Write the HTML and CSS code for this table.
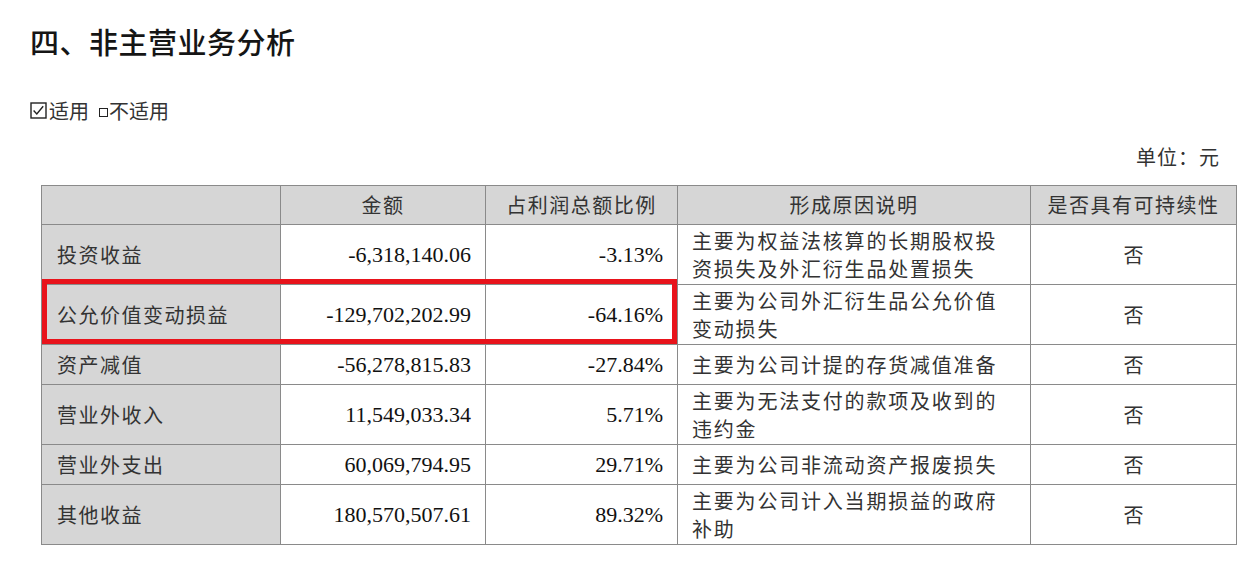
FILE: index.html
```html
<!DOCTYPE html>
<html lang="zh-CN">
<head>
<meta charset="utf-8">
<title>四、非主营业务分析</title>
<link rel="stylesheet" href="styles.css">
</head>
<body>
<div class="page">
  <h1 class="title">四、非主营业务分析</h1>
  <div class="applicable">
    <svg class="check" width="17" height="17" viewBox="0 0 17 17" aria-hidden="true">
      <rect x="1" y="1" width="15" height="15" fill="none" stroke="#222" stroke-width="1.4"/>
      <path d="M3.6 8.6 L6.8 12 L13.2 4.2" fill="none" stroke="#222" stroke-width="1.4"/>
    </svg><span>适用</span><span class="box"></span><span>不适用</span>
  </div>
  <div class="unit">单位：元</div>
  <div class="table-wrap">
    <table class="data">
      <colgroup>
        <col class="c1"><col class="c2"><col class="c3"><col class="c4"><col class="c5">
      </colgroup>
      <thead>
        <tr>
          <th></th>
          <th>金额</th>
          <th>占利润总额比例</th>
          <th>形成原因说明</th>
          <th>是否具有可持续性</th>
        </tr>
      </thead>
      <tbody>
        <tr class="two">
          <td class="name">投资收益</td>
          <td class="num">-6,318,140.06</td>
          <td class="num">-3.13%</td>
          <td class="desc">主要为权益法核算的长期股权投资损失及外汇衍生品处置损失</td>
          <td class="yn">否</td>
        </tr>
        <tr class="two">
          <td class="name">公允价值变动损益</td>
          <td class="num">-129,702,202.99</td>
          <td class="num">-64.16%</td>
          <td class="desc">主要为公司外汇衍生品公允价值变动损失</td>
          <td class="yn">否</td>
        </tr>
        <tr class="one">
          <td class="name">资产减值</td>
          <td class="num">-56,278,815.83</td>
          <td class="num">-27.84%</td>
          <td class="desc">主要为公司计提的存货减值准备</td>
          <td class="yn">否</td>
        </tr>
        <tr class="two">
          <td class="name">营业外收入</td>
          <td class="num">11,549,033.34</td>
          <td class="num">5.71%</td>
          <td class="desc">主要为无法支付的款项及收到的违约金</td>
          <td class="yn">否</td>
        </tr>
        <tr class="one">
          <td class="name">营业外支出</td>
          <td class="num">60,069,794.95</td>
          <td class="num">29.71%</td>
          <td class="desc">主要为公司非流动资产报废损失</td>
          <td class="yn">否</td>
        </tr>
        <tr class="two">
          <td class="name">其他收益</td>
          <td class="num">180,570,507.61</td>
          <td class="num">89.32%</td>
          <td class="desc">主要为公司计入当期损益的政府补助</td>
          <td class="yn">否</td>
        </tr>
      </tbody>
    </table>
    <div class="highlight"></div>
  </div>
</div>
</body>
</html>
```

FILE: styles.css
```css
* { box-sizing: border-box; }

html, body {
  margin: 0;
  padding: 0;
  background: #ffffff;
}

body {
  font-family: "Noto Sans CJK SC", "Noto Sans CJK JP", sans-serif;
  color: #2b2b2b;
}

.page {
  width: 1260px;
  height: 564px;
  padding: 21px 0 0 30px;
  overflow: hidden;
}

.title {
  margin: 0;
  font-size: 29px;
  line-height: 40px;
  font-weight: 500;
  color: #151515;
  letter-spacing: 0.5px;
}

.applicable {
  margin-top: 34px;
  display: flex;
  align-items: center;
  height: 30px;
  font-size: 20px;
  color: #333;
}

.applicable .check {
  display: block;
  margin-right: 2px;
}

.applicable .box {
  display: inline-block;
  width: 9px;
  height: 9px;
  border: 1.4px solid #222;
  margin: 5px 1px 0 10px;
}

.unit {
  margin-top: 17px;
  width: 1190px;
  text-align: right;
  font-size: 20px;
  line-height: 30px;
  letter-spacing: 1px;
  color: #333;
}

.table-wrap {
  position: relative;
  margin-top: 13px;
  margin-left: 11px;
  width: 1195px;
}

.data {
  border-collapse: collapse;
  table-layout: fixed;
  width: 1195px;
  font-size: 20px;
}

.c1 { width: 239px; }
.c2 { width: 205px; }
.c3 { width: 192px; }
.c4 { width: 353px; }
.c5 { width: 206px; }

.data th,
.data td {
  border: 1px solid #8a8a8a;
  padding: 1px 14px;
  line-height: 28px;
  vertical-align: middle;
}

.data th {
  background: #d6d6d6;
  font-weight: 400;
  height: 39px;
  color: #333;
  letter-spacing: 1.5px;
  text-align: center;
}

.data tr.one td { height: 40px; }
.data tr.two td { height: 60px; }

.data td.name {
  background: #d6d6d6;
  padding-left: 15px;
  letter-spacing: 1.5px;
  color: #333;
}

.data td.num {
  text-align: right;
  font-family: "Liberation Serif", "Times New Roman", serif;
  font-size: 22px;
  color: #111;
  padding-right: 14px;
}

.data td.desc {
  padding-left: 14px;
  padding-right: 12px;
  letter-spacing: 1.8px;
  color: #333;
}

.data td.yn {
  text-align: center;
  color: #333;
}

.highlight {
  position: absolute;
  left: 1px;
  top: 94px;
  width: 635px;
  height: 65px;
  border: 5px solid #e8131b;
  pointer-events: none;
}
```
